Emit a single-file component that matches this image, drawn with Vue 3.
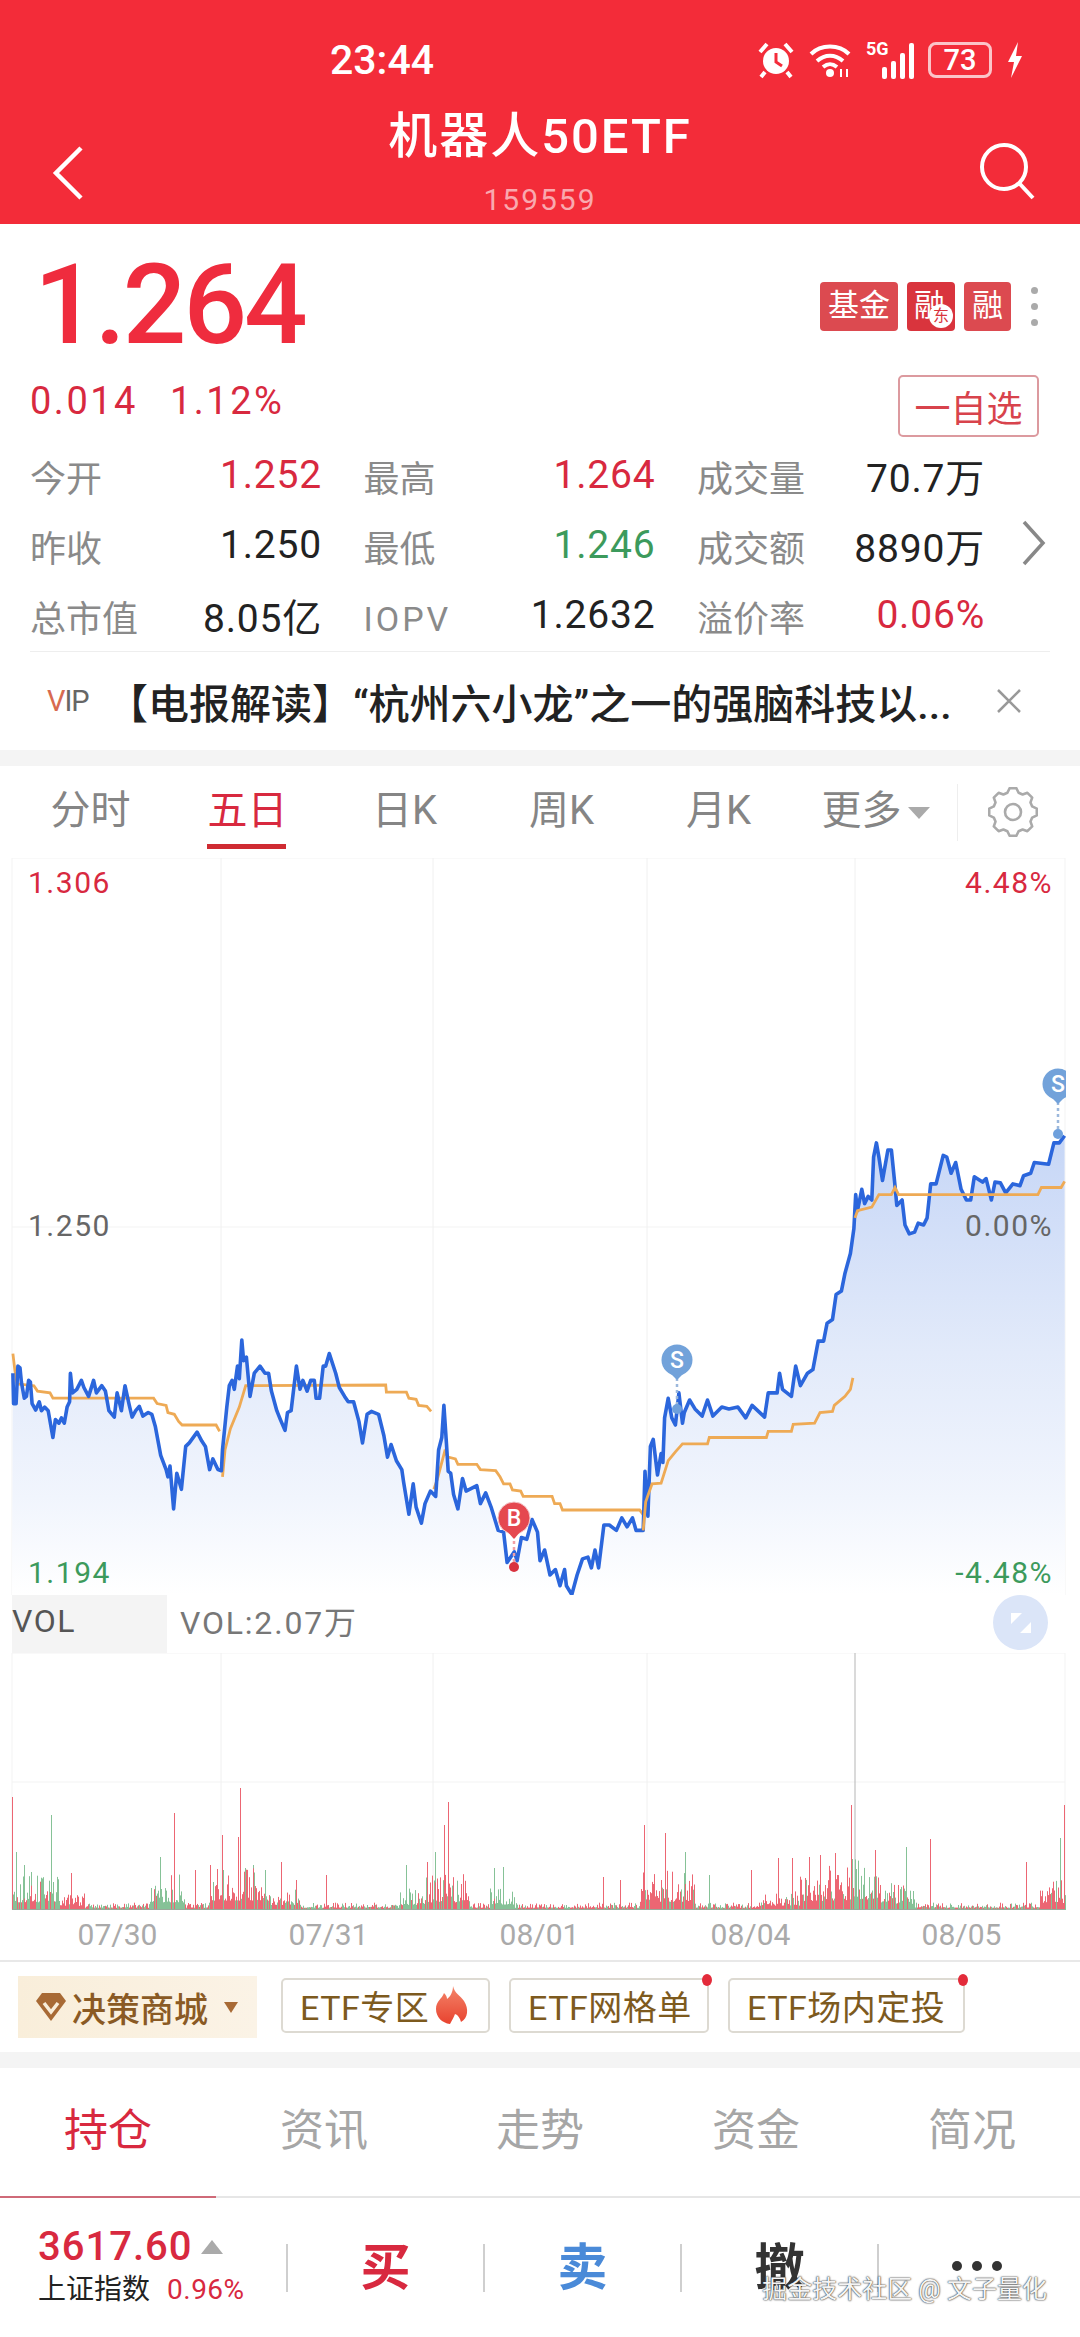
<script setup>
// traced from the chart: [x, y] pairs in chart crop units (2.8x, origin at 0,1050)
const blueA = [36,905,38,990,45,990,50,885,56,890,60,930,68,975,74,970,80,925,85,930,90,990,100,1008,110,985,116,1010,125,1000,135,1010,148,1085,155,1035,165,1045,172,1030,180,1045,188,1000,195,985,197,905,203,960,215,950,228,925,235,945,248,970,262,925,270,960,285,940,295,955,305,1010,320,1028,328,960,340,1010,350,940,362,995,370,1028,380,1010,390,998,400,1025,415,1015,425,1020,435,1055,450,1135,465,1175,470,1195,476,1165,486,1285,495,1185,508,1230,520,1110,530,1100,552,1070,565,1095,575,1110,587,1175,596,1145,610,1175,620,1178,623,1120,635,1000,642,940,650,925,656,950,665,885,670,920,677,812,682,870,690,860,700,970,712,905,728,885,742,905,752,905,760,955,775,1010,785,1035,798,1065,805,1015,815,1010,830,885,840,950,848,925,860,955,870,925,880,925,885,975,895,975,905,885,912,885,922,850,940,905,950,945,965,970,975,985,990,985,1005,1040,1015,1100,1028,1020,1040,1012,1060,1020,1075,1080,1085,1140,1095,1105,1110,1150,1125,1175,1130,1210,1145,1300,1157,1215,1165,1280,1180,1325,1190,1270,1205,1235,1220,1250,1228,1120,1237,1085,1243,995,1250,1100,1255,1180,1262,1185,1270,1245,1282,1285,1295,1200,1305,1235,1335,1220,1345,1270,1360,1240,1375,1280,1395,1345,1410,1350,1420,1435,1440,1405,1448,1430,1460,1365,1475,1370,1490,1315,1505,1350,1512,1430,1525,1400,1540,1470,1555,1455,1568,1500]
const blueB = [125,1455,130,1500,145,1525,160,1470,175,1425,190,1420,200,1450,210,1400,220,1450,235,1330,250,1330,270,1345,285,1310,300,1335,315,1310,325,1345,345,1345,350,1180,358,1305,365,1110,373,1090,385,1190,395,1130,400,1155,405,1030,415,975,425,1030,435,1050,445,960,455,1045,460,1015,475,980,490,1005,510,1025,525,980,540,1025,565,1000,585,1005,610,1000,632,1030,650,995,685,1028,695,960,720,960,727,905,735,950,760,970,772,885,785,940,805,905,820,895,835,815,850,815,860,765,875,755,885,685,900,675,910,625,925,570,935,500,940,405,945,450,957,390,965,430,975,410,985,420,990,300,998,260,1005,300,1015,365,1030,280,1040,280,1050,380,1055,435,1070,420,1078,490,1090,515,1105,510,1115,485,1130,490,1140,470,1150,375,1165,375,1185,295,1195,300,1207,345,1220,315,1235,390,1250,420,1262,420,1272,355,1295,370,1305,360,1320,420,1330,370,1345,372,1360,400,1380,375,1400,380,1410,352,1430,345,1440,315,1480,320,1495,260,1510,260,1525,240]

const orangeDays = [
  [0, [36,850,42,900,48,935,95,940,105,955,140,960,148,975,430,975,440,990,465,995,470,1015,488,1020,500,1040,510,1050,605,1050,615,1068]],
  [0, [623,1195,630,1120,645,1060,670,1000,688,940,1080,938,1082,958,1138,958,1145,975,1165,978,1172,995,1195,998,1207,1012]],
  [0, [1215,1230,1225,1200,1245,1125,1255,1140,1275,1145,1282,1160,1335,1160,1345,1175,1388,1178,1400,1195,1410,1215,1428,1215,1435,1232,1458,1235,1465,1250,1546,1250,1553,1270,1568,1270,1575,1288,1791,1288,1804,1305]],
  [520, [345,1345,352,1265,370,1215,395,1213,415,1150,435,1125,455,1103,525,1103,530,1085,690,1085,695,1068,760,1068,765,1048,825,1045,840,1015,875,1012,880,995,910,970,925,950,932,918]],
  [520, [938,470,945,450,985,440,1005,405,1040,405,1050,385,1060,405,1450,405,1460,385,1515,385,1525,368]],
]

function toPoints(list, offsetX) {
  const out = []
  for (let i = 0; i < list.length; i += 2) {
    out.push((offsetX + list[i] / 2.8).toFixed(1) + ',' + (1050 + list[i + 1] / 2.8).toFixed(1))
  }
  return out
}

const bluePts = [...toPoints(blueA, 0), ...toPoints(blueB, 520)]
const blueLine = bluePts.join(' ')
const blueArea = '12,1595 ' + bluePts.join(' ') + ' 1065,1595'
const orangeLines = orangeDays.map(([off, list]) => toPoints(list, off).join(' '))

const gridX = [221, 433, 647, 855]

// volume bars
const BASE = 257
const spikes = [[12,113,'r'],[51,95,'g'],[174,97,'r'],[240,122,'r'],[222,75,'r'],[238,73,'r'],[448,108,'r'],[444,85,'r'],[644,85,'r'],[665,77,'r'],[685,58,'g'],[851,105,'r'],[930,71,'r'],[1064,105,'r'],[1060,72,'g'],[1026,48,'r'],[906,63,'g'],[875,60,'r'],[835,57,'r'],[820,55,'r'],[809,53,'r'],[792,52,'r'],[778,52,'r'],[751,40,'r'],[709,35,'g'],[620,30,'r'],[603,33,'r'],[503,43,'g'],[494,42,'g'],[427,48,'r'],[435,58,'g'],[406,45,'g'],[326,35,'r'],[296,30,'r'],[281,48,'r'],[265,40,'g'],[253,45,'g'],[210,45,'r'],[195,40,'r'],[160,53,'g'],[71,37,'r'],[31,38,'g'],[24,45,'g'],[16,58,'g']]
// [from, to, height, share of red]
const hot = [[12,60,22,0.5],[60,85,10,0.9],[150,185,22,0.15],[210,262,28,0.7],[262,300,13,0.6],[400,425,13,0.3],[425,470,22,0.7],[490,515,15,0.1],[640,695,24,0.8],[760,800,11,0.9],[800,850,27,0.9],[850,880,32,0.5],[880,915,17,0.3],[1040,1066,20,0.9]]

let seed = 20250805
function rnd() {
  seed = (seed * 1664525 + 1013904223) % 4294967296
  return seed / 4294967296
}
let redBars = ''
let greenBars = ''
function addBar(x, h, isRed) {
  const seg = `M${x} ${BASE}V${(BASE - h).toFixed(1)}`
  if (isRed) redBars += seg
  else greenBars += seg
}
for (let x = 12; x < 1066; x += 1) {
  const zone = hot.find((z) => x >= z[0] && x < z[1])
  const amp = zone ? zone[2] : 4
  const r = rnd()
  addBar(x + 0.5, 1 + amp * (0.3 + r * r * 1.3), rnd() < (zone ? zone[3] : 0.55))
}
spikes.forEach(([x, h, c]) => addBar(x + 0.5, h, c === 'r'))

const stats = [
  { label: '今开', value: '1.252', tone: 'up' },
  { label: '最高', value: '1.264', tone: 'up' },
  { label: '成交量', value: '70.7万', tone: '' },
  { label: '昨收', value: '1.250', tone: '' },
  { label: '最低', value: '1.246', tone: 'down' },
  { label: '成交额', value: '8890万', tone: '' },
  { label: '总市值', value: '8.05亿', tone: '' },
  { label: 'IOPV', value: '1.2632', tone: '' },
  { label: '溢价率', value: '0.06%', tone: 'up' },
]
const ktabs = ['分时', '五日', '日K', '周K', '月K']
const dates = ['07/30', '07/31', '08/01', '08/04', '08/05']
const tabs = ['持仓', '资讯', '走势', '资金', '简况']

// gear outline
function gearPath() {
  const n = 8
  let d = ''
  for (let i = 0; i < n; i++) {
    const step = (Math.PI * 2) / n
    const a = i * step - Math.PI / 2
    const pts = [
      [20, a - step * 0.36],
      [24, a - step * 0.18],
      [24, a + step * 0.18],
      [20, a + step * 0.36],
    ]
    pts.forEach(([r, t], j) => {
      const cmd = i === 0 && j === 0 ? 'M' : 'L'
      d += `${cmd}${(25 + r * Math.cos(t)).toFixed(1)} ${(25 + r * Math.sin(t)).toFixed(1)}`
    })
  }
  return d + 'Z'
}
const gear = gearPath()
</script>

<template>
  <div class="page">
    <header class="top">
      <div class="status">
        <span class="time">23:44</span>
        <div class="status-icons">
          <svg width="36" height="38" viewBox="0 0 36 38">
            <circle cx="18" cy="20" r="13" fill="#fff" />
            <path d="M18 12v9l6 4" fill="none" stroke="#f42c3b" stroke-width="3" />
            <path d="M2 11 9 3M34 11 27 3M7 31l-4 5M29 31l4 5" stroke="#fff" stroke-width="4" fill="none" />
          </svg>
          <svg width="44" height="38" viewBox="0 0 44 38">
            <path d="M3 13C13 3 31 3 41 13M9 20c8-7 18-7 26 0M15 26c5-4 9-4 14 0" fill="none" stroke="#fff" stroke-width="4" />
            <circle cx="22" cy="32" r="4" fill="#fff" />
            <path d="M33 28v8M39 28v8" stroke="#fff" stroke-width="2" />
          </svg>
          <div class="signal">
            <span class="five-g">5G</span>
            <i style="height: 12px"></i><i style="height: 18px"></i><i style="height: 26px"></i><i style="height: 36px"></i>
          </div>
          <div class="battery">73</div>
          <svg width="18" height="38" viewBox="0 0 18 38">
            <path d="M12 1 2 21h6l-3 16 11-22h-6z" fill="#fff" />
          </svg>
        </div>
      </div>
      <h1 class="title">机器人50ETF</h1>
      <div class="code">159559</div>
      <svg class="back" width="32" height="56" viewBox="0 0 32 56">
        <path d="M29 3 4 28l25 25" fill="none" stroke="#fff" stroke-width="4.5" />
      </svg>
      <svg class="search" width="60" height="60" viewBox="0 0 60 60">
        <circle cx="26" cy="25" r="22" fill="none" stroke="#fff" stroke-width="4" />
        <path d="M41 41 55 56" stroke="#fff" stroke-width="4" />
      </svg>
    </header>

    <section class="quote">
      <div class="price-row">
        <div class="price">1.264</div>
        <div class="tags">
          <span class="tag">基金</span>
          <span class="tag tag-east">融<em>东</em></span>
          <span class="tag">融</span>
          <div class="more-dots"><i></i><i></i><i></i></div>
        </div>
      </div>
      <div class="change-row">
        <span class="change">0.014</span>
        <span class="change">1.12%</span>
        <button class="watch">一自选</button>
      </div>
      <div class="stats">
        <div class="stats-grid">
          <div v-for="s in stats" :key="s.label" class="stat">
            <span class="stat-label" :class="{ latin: s.label === 'IOPV' }">{{ s.label }}</span>
            <span class="stat-value" :class="s.tone">{{ s.value }}</span>
          </div>
        </div>
        <svg class="stats-more" width="26" height="46" viewBox="0 0 26 46">
          <path d="M3 2 22 23 3 44" fill="none" stroke="#888" stroke-width="3.5" />
        </svg>
      </div>
      <div class="news">
        <span class="vip"><b>V</b>IP</span>
        <span class="news-text">【电报解读】“杭州六小龙”之一的强脑科技以...</span>
        <svg width="26" height="26" viewBox="0 0 26 26">
          <path d="M2 2 24 24M24 2 2 24" stroke="#999" stroke-width="2.5" />
        </svg>
      </div>
    </section>

    <div class="gap"></div>

    <nav class="ktabs">
      <span v-for="(t, i) in ktabs" :key="t" class="ktab" :class="{ active: i === 1 }">{{ t }}</span>
      <span class="ktab">更多<i class="caret"></i></span>
      <span class="gear">
        <svg width="50" height="50" viewBox="0 0 50 50">
          <path :d="gear" fill="none" stroke="#aaa" stroke-width="2.6" stroke-linejoin="round" />
          <circle cx="25" cy="25" r="8" fill="none" stroke="#aaa" stroke-width="2.6" />
        </svg>
      </span>
    </nav>

    <div class="chart">
      <svg width="1080" height="737" viewBox="0 858 1080 737">
        <defs>
          <linearGradient id="area" gradientUnits="userSpaceOnUse" x1="0" y1="1110" x2="0" y2="1595">
            <stop offset="0" stop-color="#c3d4f6" />
            <stop offset="0.5" stop-color="#e2eafa" />
            <stop offset="0.8" stop-color="#f1f5fd" />
            <stop offset="1" stop-color="#ffffff" />
          </linearGradient>
          <clipPath id="plot"><rect x="12" y="858" width="1054" height="737" /></clipPath>
        </defs>
        <path d="M12 858H1065M12 1227H1065M12 858V1595M1065 858V1595" stroke="#f3f3f3" fill="none" />
        <path v-for="x in gridX" :key="x" :d="`M${x} 858V1595`" stroke="#f0f0f0" />
        <polygon :points="blueArea" fill="url(#area)" />
        <polyline :points="orangeLines[0]" class="avg" />
        <polyline :points="orangeLines[1]" class="avg" />
        <polyline :points="orangeLines[2]" class="avg" />
        <polyline :points="blueLine" fill="none" stroke="#2b66dc" stroke-width="3.6" stroke-linejoin="round" />
        <polyline :points="orangeLines[3]" class="avg" />
        <polyline :points="orangeLines[4]" class="avg" />

        <g clip-path="url(#plot)">
          <path d="M514 1535V1562" stroke="#f0a0a5" stroke-width="2.5" stroke-dasharray="3 3" />
          <circle cx="514" cy="1567" r="5" fill="#d9323f" />
          <circle cx="514" cy="1518" r="16" fill="#e5484f" stroke="#f3c6c9" stroke-width="1" />
          <path d="M507 1531h14l-7 8z" fill="#e5484f" />
          <text x="514" y="1526" class="pin-text">B</text>

          <path d="M677 1378V1405" stroke="#9cb8dc" stroke-width="2.5" stroke-dasharray="3 3" />
          <circle cx="677" cy="1409" r="5" fill="#6ea0dc" />
          <circle cx="677" cy="1360" r="15.5" fill="#72a2da" />
          <path d="M670 1373h14l-7 7z" fill="#72a2da" />
          <text x="677" y="1368" class="pin-text">S</text>

          <path d="M1058 1102V1130" stroke="#9cb8dc" stroke-width="2.5" stroke-dasharray="3 3" />
          <circle cx="1058" cy="1134" r="5" fill="#6ea0dc" />
          <circle cx="1058" cy="1084" r="15.5" fill="#72a2da" />
          <path d="M1051 1097h14l-7 7z" fill="#72a2da" />
          <text x="1058" y="1092" class="pin-text">S</text>
        </g>
      </svg>
      <span class="axis left top-line up">1.306</span>
      <span class="axis right top-line up">4.48%</span>
      <span class="axis left mid-line">1.250</span>
      <span class="axis right mid-line">0.00%</span>
      <span class="axis left low-line down">1.194</span>
      <span class="axis right low-line down">-4.48%</span>
    </div>

    <div class="vol-head">
      <span class="vol-name">VOL</span>
      <span class="vol-value">VOL:2.07万</span>
      <span class="expand">
        <svg width="30" height="30" viewBox="0 0 30 30">
          <path d="M5 5h11L5 16zM25 25H14l11-11z" fill="#fff" />
        </svg>
      </span>
    </div>
    <svg class="vol-chart" width="1080" height="257" viewBox="0 0 1080 257">
      <path d="M12 0H1065M12 129H1065M12 0V257M1065 0V257" stroke="#f3f3f3" fill="none" />
      <path d="M221 0V257M433 0V257M647 0V257" stroke="#f0f0f0" />
      <path d="M855 0V257" stroke="#b5b5b5" />
      <path :d="greenBars" stroke="#86c297" stroke-width="1" fill="none" />
      <path :d="redBars" stroke="#ec6673" stroke-width="1" fill="none" />
      <path d="M12 256.5H1065" stroke="#9aa89a" stroke-width="1" />
    </svg>
    <div class="dates">
      <span v-for="d in dates" :key="d">{{ d }}</span>
    </div>

    <div class="shortcuts">
      <div class="mall">
        <svg width="32" height="30" viewBox="0 0 32 30">
          <path d="M7 1h18l6 8-15 20L1 9z" fill="#a86a35" />
          <path d="M9 11l7 9 7-9" fill="none" stroke="#f9edd9" stroke-width="3.5" />
        </svg>
        <span>决策商城</span>
        <i class="mall-caret"></i>
      </div>
      <div class="chip chip-zone">ETF专区
        <svg width="34" height="38" viewBox="0 0 34 38">
          <defs>
            <linearGradient id="fire" x1="0" y1="0" x2="0" y2="1">
              <stop offset="0" stop-color="#f4856a" />
              <stop offset="1" stop-color="#e8432f" />
            </linearGradient>
          </defs>
          <path d="M18 0c2 8 7 9 11 15 5 8 4 17-3 21-1-4-3-7-6-8-1 3-3 6-5 10C7 37 1 31 1 23 1 15 7 13 9 7c2 2 3 4 3 6 4-3 6-8 6-13z" fill="url(#fire)" />
        </svg>
      </div>
      <div class="chip chip-grid dot">ETF网格单</div>
      <div class="chip chip-plan dot">ETF场内定投</div>
    </div>

    <div class="gap"></div>

    <nav class="tabs">
      <span v-for="(t, i) in tabs" :key="t" class="tab" :class="{ active: i === 0 }">{{ t }}</span>
    </nav>

    <footer class="bottom">
      <div class="index">
        <div class="index-top">3617.60<i class="index-arrow"></i></div>
        <div class="index-sub">上证指数<span>0.96%</span></div>
      </div>
      <i class="sep"></i>
      <span class="action buy">买</span>
      <i class="sep"></i>
      <span class="action sell">卖</span>
      <i class="sep"></i>
      <span class="action cancel">撤</span>
      <i class="sep"></i>
      <span class="action dots"><i></i><i></i><i></i></span>
      <span class="watermark">掘金技术社区 @ 文子量化</span>
    </footer>
  </div>
</template>

<style scoped>
.page {
  position: relative;
  width: 1080px;
  height: 2337px;
  overflow: hidden;
  background: #fff;
  font-family: Roboto, "Noto Sans CJK SC", sans-serif;
  color: #222;
}

.top {
  position: relative;
  height: 224px;
  background: #f32c39;
  color: #fff;
  text-align: center;
}
.status {
  display: flex;
  align-items: center;
  height: 50px;
  padding: 35px 56px 0 330px;
}
.time {
  font-size: 41px;
  font-weight: 500;
}
.status-icons {
  display: flex;
  align-items: center;
  gap: 14px;
  margin-left: auto;
}
.signal {
  position: relative;
  display: flex;
  align-items: flex-end;
  gap: 4px;
  height: 38px;
  width: 48px;
  justify-content: flex-end;
}
.signal i {
  width: 5px;
  background: #fff;
  border-radius: 2px;
}
.five-g {
  position: absolute;
  left: 0;
  top: -3px;
  font-size: 18px;
  font-weight: 700;
}
.battery {
  width: 64px;
  height: 36px;
  box-sizing: border-box;
  border: 3px solid #fbc4c8;
  border-radius: 8px;
  font-size: 29px;
  font-weight: 500;
  line-height: 30px;
}
.title {
  margin: 22px 0 0;
  font-size: 49px;
  line-height: 60px;
  font-weight: 500;
  letter-spacing: 2px;
}
.code {
  margin-top: 13px;
  font-size: 30px;
  line-height: 40px;
  letter-spacing: 2px;
  color: #f9a9af;
}
.back {
  position: absolute;
  left: 52px;
  top: 145px;
}
.search {
  position: absolute;
  left: 978px;
  top: 142px;
}

.price-row {
  display: flex;
  align-items: center;
  justify-content: space-between;
  height: 151px;
  padding: 0 42px 0 34px;
}
.price {
  font-size: 112px;
  font-weight: 500;
  line-height: 1;
  color: #ef2c3e;
  letter-spacing: -3px;
  margin-top: 10px;
}
.tags {
  display: flex;
  align-items: center;
  gap: 9px;
  margin-top: 14px;
}
.tag {
  position: relative;
  height: 49px;
  line-height: 47px;
  padding: 0 8px;
  box-sizing: border-box;
  background: #dc4a50;
  border-radius: 4px;
  color: #fff;
  font-size: 31px;
}
.tag-east {
  padding: 0 7px;
  width: 48px;
  overflow: hidden;
  background: #d9343d;
  white-space: nowrap;
}
.tag-east em {
  position: absolute;
  right: 2px;
  bottom: 3px;
  width: 24px;
  height: 24px;
  border-radius: 50%;
  background: #fff;
  color: #d9343d;
  font-size: 16px;
  font-style: normal;
  line-height: 24px;
  text-align: center;
}
.more-dots {
  display: flex;
  flex-direction: column;
  gap: 9px;
  margin-left: 11px;
}
.more-dots i {
  width: 7px;
  height: 7px;
  border-radius: 50%;
  background: #aaa;
}

.change-row {
  display: flex;
  align-items: center;
  gap: 32px;
  height: 65px;
  padding: 0 41px 0 30px;
}
.change {
  font-size: 38px;
  letter-spacing: 2.5px;
  color: #d8293f;
  margin-top: -14px;
}
.watch {
  margin-left: auto;
  width: 141px;
  height: 62px;
  padding: 0;
  background: #fff;
  border: 2px solid #dc9a9f;
  border-radius: 5px;
  color: #d8434c;
  font-family: inherit;
  font-size: 36px;
  margin-top: -3px;
}

.stats {
  display: flex;
  align-items: center;
  height: 211px;
  padding: 0 33px 0 30px;
}
.stats-grid {
  display: grid;
  grid-template-columns: 292px 292px 288px;
  grid-auto-rows: 70px;
  column-gap: 41.5px;
}
.stat {
  display: flex;
  align-items: center;
  justify-content: space-between;
}
.stat-label {
  font-size: 36px;
  color: #8a8a8a;
}
.stat-label.latin {
  margin-top: 6px;
  font-size: 34px;
  letter-spacing: 3px;
}
.stat-value {
  font-size: 39px;
  letter-spacing: 0.8px;
  color: #222;
  margin-top: -1px;
}
.stats-more {
  margin: 0 0 6px auto;
}
.up {
  color: #d8293f;
}
.down {
  color: #3c9a5c;
}

.news {
  display: flex;
  align-items: center;
  height: 99px;
  margin: 0 30px;
  padding-right: 28px;
  border-top: 1px solid #eeeeee;
  box-sizing: border-box;
}
.vip {
  margin-left: 17px;
  width: 60px;
  font-size: 29px;
  color: #666;
  flex: none;
  letter-spacing: -1px;
}
.vip b {
  font-weight: 400;
  color: #d86a50;
}
.news-text {
  font-size: 41px;
  font-weight: 500;
  color: #222;
  white-space: nowrap;
  margin-right: auto;
}

.gap {
  height: 16px;
  background: #f4f4f4;
}

.ktabs {
  display: flex;
  align-items: center;
  height: 92px;
  padding-left: 12px;
}
.ktab {
  position: relative;
  flex: 0 0 157px;
  text-align: center;
  font-size: 40px;
  color: #858585;
  line-height: 92px;
  height: 92px;
  margin-top: -3px;
}
.ktab.active {
  color: #d8293f;
}
.ktab.active::after {
  content: "";
  position: absolute;
  left: 38px;
  bottom: 8px;
  width: 79px;
  height: 5px;
  background: #cf2b32;
}
.caret {
  display: inline-block;
  margin-left: 6px;
  border-left: 11px solid transparent;
  border-right: 11px solid transparent;
  border-top: 12px solid #aaa;
  vertical-align: 5px;
}
.gear {
  display: flex;
  align-items: center;
  justify-content: center;
  height: 57px;
  margin-left: 3px;
  padding-left: 30px;
  border-left: 1px solid #eee;
}

.chart {
  position: relative;
  height: 737px;
}
.chart svg {
  display: block;
}
.avg {
  fill: none;
  stroke: #eeaa55;
  stroke-width: 2.8;
}
.pin-text {
  fill: #fff;
  font-size: 23px;
  font-weight: 500;
  text-anchor: middle;
}
.axis {
  position: absolute;
  font-size: 30px;
  line-height: 36px;
  letter-spacing: 1.5px;
  color: #666;
}
.axis.up {
  color: #d8293f;
}
.axis.down {
  color: #3c9a5c;
}
.left {
  left: 28px;
}
.right {
  right: 27px;
}
.top-line {
  top: 7px;
}
.mid-line {
  top: 350px;
}
.low-line {
  top: 697px;
}

.vol-head {
  display: flex;
  height: 58px;
  padding-left: 12px;
}
.vol-name {
  width: 155px;
  padding-top: 6px;
  background: #f4f4f4;
  font-size: 32px;
  letter-spacing: 1.5px;
  line-height: 40px;
  color: #555;
}
.vol-value {
  margin-left: 13px;
  margin-top: 8px;
  font-size: 32px;
  letter-spacing: 1.8px;
  line-height: 40px;
  color: #777;
}
.expand {
  display: flex;
  align-items: center;
  justify-content: center;
  width: 55px;
  height: 55px;
  margin-left: auto;
  margin-right: 32px;
  border-radius: 50%;
  background: #dbe5f8;
}
.vol-chart {
  display: block;
}
.dates {
  display: grid;
  grid-template-columns: repeat(5, 211px);
  height: 50px;
  padding-left: 12px;
  border-bottom: 2px solid #e8e8e8;
  text-align: center;
  font-size: 30px;
  line-height: 50px;
  color: #aaa;
}

.shortcuts {
  display: flex;
  align-items: center;
  height: 90px;
  padding-left: 18px;
}
.mall {
  display: flex;
  align-items: center;
  width: 239px;
  height: 62px;
  padding-left: 17px;
  box-sizing: border-box;
  background: linear-gradient(90deg, #f9eeda, #fbf3e6);
  color: #8a5a24;
  font-size: 34px;
  font-weight: 500;
  margin-right: 24px;
}
.mall span {
  margin-left: 5px;
}
.mall-caret {
  margin-left: 16px;
  border-left: 7px solid transparent;
  border-right: 7px solid transparent;
  border-top: 11px solid #a86a35;
}
.chip {
  position: relative;
  display: flex;
  align-items: center;
  gap: 6px;
  height: 55px;
  padding: 0 17px;
  box-sizing: border-box;
  border: 2px solid #dddad2;
  border-radius: 5px;
  color: #7d5a1e;
  font-size: 34px;
  letter-spacing: 0.5px;
  white-space: nowrap;
  margin-top: -4px;
}
.chip-zone {
  width: 209px;
  margin-right: 19px;
}
.chip-grid {
  width: 200px;
  margin-right: 19px;
}
.chip-plan {
  width: 237px;
}
.chip.dot::after {
  content: "";
  position: absolute;
  right: -5px;
  top: -6px;
  width: 10px;
  height: 12px;
  border-radius: 50%;
  background: #e32b3a;
}

.tabs {
  position: relative;
  display: grid;
  grid-template-columns: repeat(5, 216px);
  height: 130px;
  box-sizing: border-box;
  border-bottom: 2px solid #e6e6e6;
}
.tab {
  position: relative;
  text-align: center;
  font-size: 44px;
  line-height: 126px;
  color: #a6a6a6;
}
.tab.active {
  color: #d8293f;
}
.tab.active::after {
  content: "";
  position: absolute;
  left: 0;
  right: 0;
  bottom: -2px;
  height: 2px;
  background: #cf6a78;
}

.bottom {
  position: relative;
  display: flex;
  align-items: center;
  height: 139px;
  box-sizing: border-box;
}
.index {
  width: 286px;
  padding-left: 38px;
  box-sizing: border-box;
  flex: none;
}
.index-top {
  display: flex;
  align-items: center;
  font-size: 40px;
  letter-spacing: 1px;
  line-height: 46px;
  font-weight: 500;
  color: #d8293f;
  margin-top: -3px;
}
.index-arrow {
  margin-left: 8px;
  border-left: 11px solid transparent;
  border-right: 11px solid transparent;
  border-bottom: 14px solid #aaa;
}
.index-sub {
  margin-top: 1px;
  font-size: 28px;
  line-height: 38px;
  white-space: nowrap;
  color: #222;
}
.index-sub span {
  margin-left: 17px;
  font-size: 28px;
  letter-spacing: 0.5px;
  color: #d8293f;
}
.sep {
  flex: none;
  width: 2px;
  height: 48px;
  background: #cfcfcf;
}
.action {
  flex: 0 0 195px;
  text-align: center;
  font-size: 50px;
  font-weight: 700;
  line-height: 60px;
}
.buy {
  color: #d8293f;
}
.sell {
  color: #4a8ad8;
}
.cancel {
  color: #333;
}
.dots {
  display: flex;
  justify-content: center;
  gap: 10px;
  margin-bottom: 4px;
}
.dots i {
  width: 10px;
  height: 10px;
  border-radius: 50%;
  background: #333;
}
.watermark {
  position: absolute;
  right: 33px;
  top: 72px;
  font-size: 25px;
  line-height: 40px;
  color: #f4f4f4;
  text-shadow: 0 0 2px #333, 0 0 1px #333;
  white-space: nowrap;
}
</style>

<style>
body {
  margin: 0;
}
</style>
